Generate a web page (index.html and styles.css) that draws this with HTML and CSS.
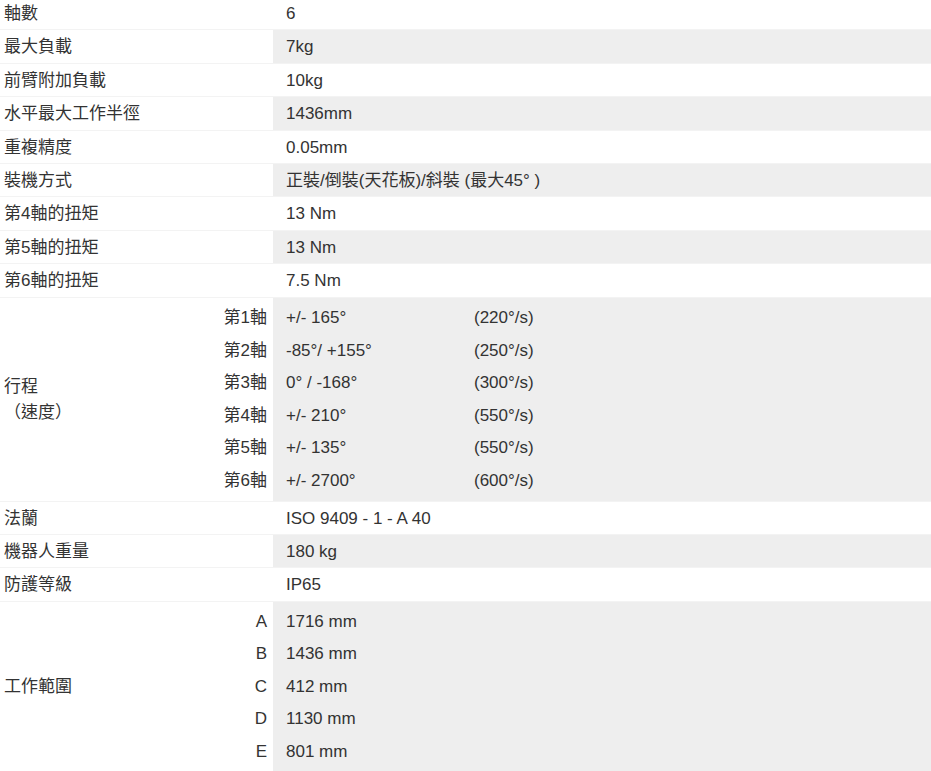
FILE: index.html
```html
<!DOCTYPE html>
<html lang="zh-Hant">
<head>
<meta charset="utf-8">
<title>規格</title>
<link rel="stylesheet" href="styles.css">
</head>
<body>
<div class="spec">
  <div class="row"><div class="k">軸數</div><div class="v">6</div></div>
  <div class="row"><div class="k">最大負載</div><div class="v">7kg</div></div>
  <div class="row"><div class="k">前臂附加負載</div><div class="v">10kg</div></div>
  <div class="row"><div class="k">水平最大工作半徑</div><div class="v">1436mm</div></div>
  <div class="row"><div class="k">重複精度</div><div class="v">0.05mm</div></div>
  <div class="row"><div class="k">裝機方式</div><div class="v">正裝/倒裝(天花板)/斜裝 (最大45° )</div></div>
  <div class="row"><div class="k">第4軸的扭矩</div><div class="v">13 Nm</div></div>
  <div class="row"><div class="k">第5軸的扭矩</div><div class="v">13 Nm</div></div>
  <div class="row"><div class="k">第6軸的扭矩</div><div class="v">7.5 Nm</div></div>
  <div class="row group travel">
    <div class="k">
      <div class="glabel tall">行程<br>（速度）</div>
      <div class="subs">
        <div class="sub">第1軸</div>
        <div class="sub">第2軸</div>
        <div class="sub">第3軸</div>
        <div class="sub">第4軸</div>
        <div class="sub">第5軸</div>
        <div class="sub">第6軸</div>
      </div>
    </div>
    <div class="v">
      <div class="sub pair"><span>+/- 165°</span><span>(220°/s)</span></div>
      <div class="sub pair"><span>-85°/ +155°</span><span>(250°/s)</span></div>
      <div class="sub pair"><span>0° / -168°</span><span>(300°/s)</span></div>
      <div class="sub pair"><span>+/- 210°</span><span>(550°/s)</span></div>
      <div class="sub pair"><span>+/- 135°</span><span>(550°/s)</span></div>
      <div class="sub pair"><span>+/- 2700°</span><span>(600°/s)</span></div>
    </div>
  </div>
  <div class="row"><div class="k">法蘭</div><div class="v">ISO 9409 - 1 - A 40</div></div>
  <div class="row"><div class="k">機器人重量</div><div class="v">180 kg</div></div>
  <div class="row"><div class="k">防護等級</div><div class="v">IP65</div></div>
  <div class="row group range">
    <div class="k">
      <div class="glabel">工作範圍</div>
      <div class="subs">
        <div class="sub">A</div>
        <div class="sub">B</div>
        <div class="sub">C</div>
        <div class="sub">D</div>
        <div class="sub">E</div>
      </div>
    </div>
    <div class="v">
      <div class="sub">1716 mm</div>
      <div class="sub">1436 mm</div>
      <div class="sub">412 mm</div>
      <div class="sub">1130 mm</div>
      <div class="sub">801 mm</div>
    </div>
  </div>
</div>
</body>
</html>
```

FILE: styles.css
```css
html, body {
  margin: 0;
  padding: 0;
  background: #fff;
}

body {
  font-family: "Liberation Sans", "Noto Sans CJK TC", Arial, sans-serif;
  font-size: 17px;
  color: #333;
  overflow: hidden;
}

.spec {
  margin-top: -3px;
  width: 931px;
}

.row {
  display: grid;
  grid-template-columns: 273px 1fr;
  border-top: 1px solid #f3f3f3;
}

.row:first-child {
  border-top: none;
}

.k {
  padding: 6px 6px 4px 4px;
  line-height: 22.4px;
  white-space: nowrap;
}

.v {
  padding: 6px 13px 4px;
  line-height: 22.4px;
  white-space: nowrap;
}

.row:nth-child(even) .v {
  background: #eeeeee;
}

.group .k {
  display: flex;
  align-items: center;
  justify-content: space-between;
  padding: 0 6px 0 4px;
}

.group .v {
  padding: 0 13px;
}

.travel .k,
.travel .v {
  padding-top: 4.5px;
  padding-bottom: 3.5px;
}

.range .k,
.range .v {
  padding-top: 4px;
  padding-bottom: 4px;
}

.glabel.tall {
  line-height: 26px;
}

.subs {
  display: flex;
  flex-direction: column;
  align-items: flex-end;
}

.sub {
  height: 32.5px;
  line-height: 32.5px;
}

.pair {
  display: grid;
  grid-template-columns: 188px auto;
}
```
